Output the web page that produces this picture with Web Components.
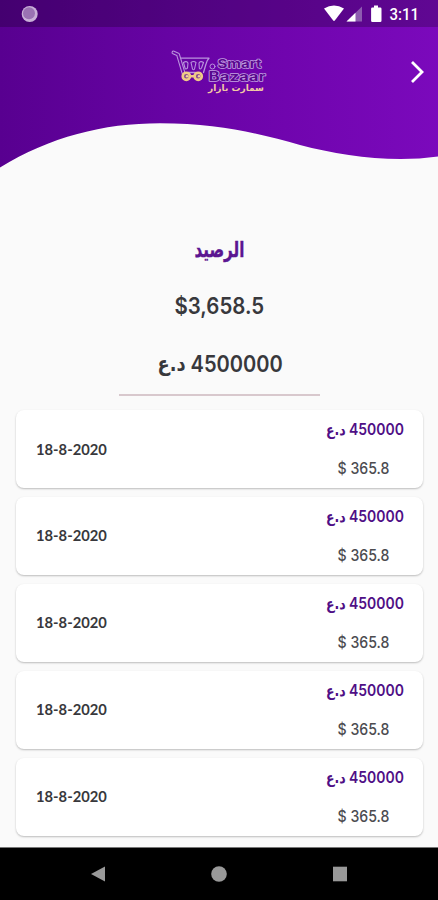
<!DOCTYPE html>
<html lang="ar">
<head>
<meta charset="utf-8">
<title>Smart Bazaar</title>
<style>
html,body{margin:0;height:100%}
body{background:#fafafa;font-family:Inter,"DejaVu Sans",sans-serif;overflow:hidden}
</style>
</head>
<body>
<wallet-screen></wallet-screen>
<script>
const define = (name, html, setup) => customElements.define(name, class extends HTMLElement {
  connectedCallback() {
    if (this.shadowRoot) return;
    const t = document.createElement('template');
    t.innerHTML = html;
    this.attachShadow({mode: 'open'}).appendChild(t.content.cloneNode(true));
    if (setup) setup(this, this.shadowRoot);
  }
});

/* Text condensed or widened to the width given in "w". */
define('fit-text', `<style>
:host{display:flex;justify-content:center;flex:none;white-space:nowrap}
span{flex:none;display:block}
</style><span><slot></slot></span>`, (el, root) => {
  const w = +el.getAttribute('w'), span = root.querySelector('span');
  el.style.width = w + 'px';
  span.style.transform = `scaleX(${w / span.offsetWidth})`;
});

define('status-bar', `<style>
:host{display:flex;height:27px;background:rgba(0,0,0,.22);color:#fff}
svg{display:block}
</style>
<svg width="438" height="27" viewBox="0 0 438 27">
<circle cx="29.7" cy="14" r="8" fill="#c9b0d8"/><circle cx="29" cy="13.3" r="6" fill="#9a72b3"/>
<path d="M324 8.5Q334 2.5 344 8.5L335 20.3Q334 21.6 333 20.3Z" fill="#fff"/>
<path d="M346.5 21.5L362 6.5V21.5Z" fill="#8d5bb0"/><path d="M346.5 21.5L355.5 12.8V21.5Z" fill="#fff"/>
<path d="M374 5.5h4v2h2.2q1.3 0 1.3 1.3v12q0 1.3-1.3 1.3h-7.8q-1.3 0-1.3-1.3v-12q0-1.3 1.3-1.3h1.6z" fill="#fff"/>
<text x="389.5" y="20.3" font-family="Roboto" font-size="16" font-weight="500" fill="#fff" textLength="29.5" lengthAdjust="spacingAndGlyphs">3:11</text>
</svg>`);

define('brand-logo', `<style>:host{display:block;width:100px;height:46px}svg{display:block}</style>
<svg width="100" height="46" viewBox="169 49 100 46" fill="none" stroke-linecap="round" stroke-linejoin="round">
<g stroke="#b993dd">
<path d="M173.5 52.5L178 54.5L183.5 73" stroke-width="4"/>
<path d="M173.5 52.5L178 54.5L183.5 73" stroke="#6b05a6" stroke-width="1.8"/>
<path d="M181 58.2H209Q207 60 206 64L203.5 72.5M188 72.5H195.5" stroke-width="1.3"/>
<path d="M183.5 62.5Q186.5 60.5 188 63L187.5 68Q185.5 70 185 68ZM191 62.5Q193.5 60.5 196 62.5L194.5 69Q193.5 70.5 192.5 69ZM199 63Q200.5 60.5 203.5 62.5L201.5 68Q200 70 199.3 68Z" stroke-width="1.1"/>
</g>
<g fill="#8a4d91" stroke="#f0cb86" stroke-width="2.6"><circle cx="186.3" cy="76.3" r="3.6"/><circle cx="198.2" cy="76.3" r="3.6"/><path d="M190 76.3h4.5"/></g>
<g fill="#f5d69a"><circle cx="187" cy="76.3" r="1.2"/><circle cx="199" cy="76.3" r="1.2"/></g>
<g font-family="Inter" font-weight="700" fill="#59078f" stroke="#c4a3e2" stroke-width="1.3" paint-order="stroke fill">
<text x="217.5" y="68" font-size="12" textLength="44" lengthAdjust="spacingAndGlyphs">Smart</text>
<text x="208.5" y="80.6" font-size="12.5" textLength="57" lengthAdjust="spacingAndGlyphs">Bazaar</text>
</g>
<circle cx="212.5" cy="66.5" r="2.5" stroke="#b993dd"/>
<text x="236" y="90.5" text-anchor="middle" direction="rtl" font-family="DejaVu Sans" font-weight="700" font-size="9" fill="#f2c9a4" textLength="56" lengthAdjust="spacingAndGlyphs">سمارت بازار</text>
</svg>`);

define('app-header', `<style>
:host{display:grid;height:170px;grid-template:27px 1fr/1fr;background:linear-gradient(90deg,#580090 0%,#6603a3 38%,#7005ae 65%,#7b09bc 100%);
clip-path:path("M0 0H438V156.5C392 163 342 156 300 145C260 134 220 123.3 160 123.3C103 123.3 50 137 0 167.5Z")}
.bar{display:grid;grid-template-columns:1fr 100px 1fr;height:90px;align-items:center}
brand-logo{grid-column:2}
.next{justify-self:end;padding-right:12px;display:block}
</style>
<status-bar></status-bar>
<div class="bar"><brand-logo></brand-logo>
<svg class="next" width="17" height="24" viewBox="0 0 17 24" fill="none" stroke="#fff" stroke-width="2.8"><path d="M3 2L13 12L3 22"/></svg></div>`);

define('balance-summary', `<style>
:host{display:flex;flex-direction:column;align-items:center;height:240px;color:#38383c;font-weight:600;font-size:22.5px}
.title{margin-top:62px;color:#5b1591;font:700 21.5px/36px "DejaVu Sans",sans-serif;height:36px;-webkit-text-stroke:.4px}
.usd{margin-top:20px;line-height:36px}
.iqd{display:flex;direction:rtl;gap:5px;margin:22px 0 0 2px;line-height:36px}
.cur{font-family:"DejaVu Sans";font-weight:700;font-size:21px}
hr{width:201px;height:2px;border:0;margin:12px 0 0;background:#d8c8cd}
</style>
<fit-text class="title" w="50">الرصيد</fit-text>
<fit-text class="usd" w="90">$3,658.5</fit-text>
<div class="iqd"><fit-text w="92">4500000</fit-text><fit-text class="cur" w="28">د.ع</fit-text></div>
<hr>`);

define('transaction-card', `<style>
:host{display:flex;align-items:center;justify-content:space-between;box-sizing:border-box;height:78px;padding:0 19px 0 20px;background:#fff;border-radius:8px;box-shadow:0 1px 2px rgba(0,0,0,.25)}
.date{font:700 16px/24px Lato,sans-serif;color:#38383c;padding-bottom:1px}
.sum{display:flex;flex-direction:column;align-items:flex-end;gap:15px;padding-top:1px}
.iqd{display:flex;direction:rtl;gap:3px;color:#4f0f86;font-weight:600;font-size:15.5px;line-height:24px}
.cur{font-family:"DejaVu Sans";font-weight:700;font-size:15px}
.usd{font-size:15.5px;line-height:24px;font-weight:500;color:#4c4c50;margin-right:14.5px}
</style>
<fit-text class="date" w="71"><slot name="date"></slot></fit-text>
<div class="sum"><div class="iqd"><fit-text w="55"><slot name="iqd"></slot></fit-text><fit-text class="cur" w="20">د.ع</fit-text></div>
<fit-text class="usd" w="52"><slot name="usd"></slot></fit-text></div>`);

define('nav-bar', `<style>
:host{display:flex;justify-content:center;align-items:center;gap:105px;height:53px;box-sizing:border-box;background:#000;border-top:1px solid #777}
svg{display:block}
</style>
<svg width="16" height="16"><path d="M1 8L15 .5V15.5Z" fill="#999"/></svg>
<svg width="16" height="16"><circle cx="8" cy="8" r="7.8" fill="#999"/></svg>
<svg width="16" height="16"><path d="M1 .7H15V15.3H1Z" fill="#999"/></svg>`);

const card = `<transaction-card><span slot="date">18-8-2020</span><span slot="iqd">450000</span><span slot="usd">$ 365.8</span></transaction-card>`;
define('wallet-screen', `<style>
:host{display:flex;flex-direction:column;width:438px;height:900px;background:#fafafa}
.list{flex:1;display:flex;flex-direction:column;gap:8.9px;padding:0 15px 0 16px}
</style>
<app-header></app-header><balance-summary></balance-summary>
<div class="list">${card.repeat(5)}</div><nav-bar></nav-bar>`);
</script>
</body>
</html>
